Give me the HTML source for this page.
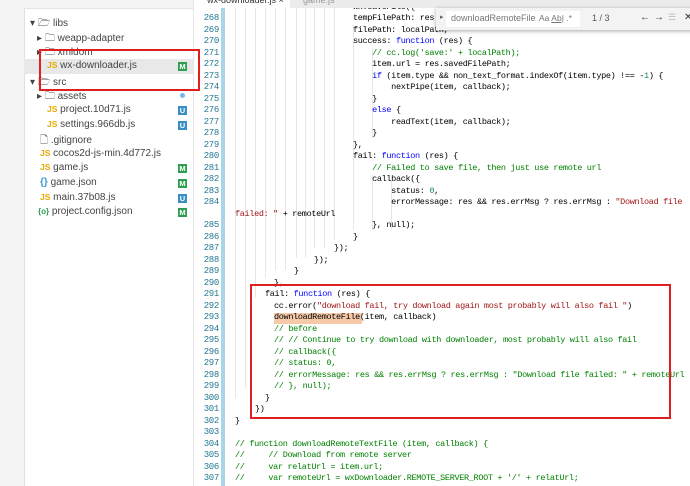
<!DOCTYPE html><html><head><style>
body{margin:0;width:690px;height:486px;overflow:hidden;background:#fff;position:relative;font-family:"Liberation Sans",sans-serif}
.a{position:absolute;white-space:nowrap}
.sb{font-size:10px;color:#444;white-space:nowrap}
.cd{position:absolute;font-family:"Liberation Mono",monospace;font-size:8.5px;letter-spacing:-0.33px;white-space:pre;line-height:11.5px;color:#000}
.ln{position:absolute;left:194px;width:25px;text-align:right;font-family:"Liberation Mono",monospace;font-size:9px;letter-spacing:-0.3px;color:#237893;line-height:11.5px}
.k{color:#0000ff}.c{color:#008000}.s{color:#a31515}.n{color:#098658}
.b{position:absolute;width:9px;height:9px;font-size:7.5px;font-weight:bold;color:#fff;text-align:center;line-height:9px;left:178px}
.js{color:#e8a800;font-size:8.5px;font-weight:bold}
.g{position:absolute;width:1px;background:#e6e6e6}
</style></head><body>
<div class="a" style="left:0;top:0;width:24px;height:486px;background:#f3f3f3;border-right:1px solid #e0e0e0"></div>
<div class="a" style="left:24px;top:0;width:169px;height:8px;background:#f3f3f3;border-bottom:1px solid #e5e5e5"></div>
<div class="a" style="left:193px;top:0;width:1px;height:486px;background:#e5e5e5"></div>
<div class="a" style="left:24px;top:59px;width:169px;height:15px;background:#e8e8e8"></div>
<div class="a sb" style="left:30px;top:16px">▾ <span style="color:#555">🗁</span> libs</div>
<div class="a sb" style="left:37px;top:31px">▸ <span style="color:#555">🗀</span> weapp-adapter</div>
<div class="a sb" style="left:37px;top:45px">▸ <span style="color:#555">🗀</span> xmldom</div>
<div class="a sb" style="left:47px;top:60px"><span class="js">JS</span> wx-downloader.js</div>
<div class="a sb" style="left:30px;top:75px">▾ <span style="color:#555">🗁</span> src</div>
<div class="a sb" style="left:37px;top:89px">▸ <span style="color:#555">🗀</span> assets</div>
<div class="a sb" style="left:47px;top:104px"><span class="js">JS</span> project.10d71.js</div>
<div class="a sb" style="left:47px;top:119px"><span class="js">JS</span> settings.966db.js</div>
<div class="a sb" style="left:40px;top:133px"><span style="color:#555">🗋</span> .gitignore</div>
<div class="a sb" style="left:40px;top:148px"><span class="js">JS</span> cocos2d-js-min.4d772.js</div>
<div class="a sb" style="left:40px;top:162px"><span class="js">JS</span> game.js</div>
<div class="a sb" style="left:40px;top:177px"><span style="color:#3b9bd8;font-weight:bold">{}</span> game.json</div>
<div class="a sb" style="left:40px;top:192px"><span class="js">JS</span> main.37b08.js</div>
<div class="a sb" style="left:38px;top:206px"><span style="color:#2e9e4f;font-size:8px;font-weight:bold">{o}</span> project.config.json</div>
<div class="b" style="top:62px;background:#2e9e4f">M</div>
<div class="a" style="left:180px;top:93px;width:5px;height:5px;border-radius:50%;background:#7cb8e8"></div>
<div class="b" style="top:106px;background:#3a8ec8">U</div>
<div class="b" style="top:121px;background:#3a8ec8">U</div>
<div class="b" style="top:164px;background:#2e9e4f">M</div>
<div class="b" style="top:179px;background:#2e9e4f">M</div>
<div class="b" style="top:194px;background:#3a8ec8">U</div>
<div class="b" style="top:208px;background:#2e9e4f">M</div>
<div class="a" style="left:39px;top:49px;width:157px;height:38px;border:2px solid #e02020"></div>
<!-- guides -->
<div class="g" style="left:235px;top:8px;height:390px"></div>
<div class="g" style="left:245px;top:8px;height:380px"></div>
<div class="g" style="left:255px;top:8px;height:290px"></div>
<div class="g" style="left:265px;top:8px;height:270px"></div>
<div class="g" style="left:275px;top:8px;height:262px"></div>
<div class="g" style="left:285px;top:8px;height:262px"></div>
<div class="g" style="left:296px;top:8px;height:250px"></div>
<div class="g" style="left:305px;top:8px;height:250px"></div>
<div class="g" style="left:314px;top:8px;height:240px"></div>
<div class="g" style="left:324px;top:8px;height:240px"></div>
<div class="g" style="left:334px;top:8px;height:232px"></div>
<div class="g" style="left:353px;top:25px;height:205px"></div>
<div class="g" style="left:372px;top:48px;height:90px"></div>
<div class="g" style="left:372px;top:175px;height:55px"></div>
<div class="g" style="left:391px;top:180px;height:50px"></div>
<!-- line numbers & code -->
<div class="cd" style="left:353px;top:1.75px">wx.saveFile({</div>
<div class="ln" style="top:13.25px">268<br>269<br>270<br>271<br>272<br>273<br>274<br>275<br>276<br>277<br>278<br>279<br>280<br>281<br>282<br>283<br>284</div>
<div class="cd" style="left:353px;top:13.25px">tempFilePath: res
filePath: localPath,
success: <span class="k">function</span> (res) {
    <span class="c">// cc.log('save:' + localPath);</span>
    item.url = res.savedFilePath;
    <span class="k">if</span> (item.type &amp;&amp; non_text_format.indexOf(item.type) !== -<span class="n">1</span>) {
        nextPipe(item, callback);
    }
    <span class="k">else</span> {
        readText(item, callback);
    }
},
fail: <span class="k">function</span> (res) {
    <span class="c">// Failed to save file, then just use remote url</span>
    callback({
        status: <span class="n">0</span>,
        errorMessage: res &amp;&amp; res.errMsg ? res.errMsg : <span class="s">"Download file</span></div>
<div class="cd" style="left:235px;top:208.75px"><span class="s">failed: "</span> + remoteUrl</div>
<div class="ln" style="top:220.25px">285<br>286<br>287<br>288<br>289<br>290<br>291<br>292<br>293<br>294<br>295<br>296<br>297<br>298<br>299<br>300<br>301<br>302<br>303<br>304<br>305<br>306<br>307</div>
<div class="cd" style="left:372px;top:220.25px">}, null);</div>
<div class="cd" style="left:353px;top:231.75px">}</div>
<div class="cd" style="left:334px;top:243.25px">});</div>
<div class="cd" style="left:314px;top:254.75px">});</div>
<div class="cd" style="left:294px;top:266.25px">}</div>
<div class="cd" style="left:274px;top:277.75px">},</div>
<div class="cd" style="left:265px;top:289.25px">fail: <span class="k">function</span> (res) {</div>
<div class="a" style="left:274px;top:312.5px;width:88px;height:11px;background:#f6c9a8"></div>
<div class="cd" style="left:274px;top:300.75px">cc.error(<span class="s">"download fail, try download again most probably will also fail "</span>)
downloadRemoteFile(item, callback)
<span class="c">// before
// // Continue to try download with downloader, most probably will also fail
// callback({
// status: 0,
// errorMessage: res &amp;&amp; res.errMsg ? res.errMsg : "Download file failed: " + remoteUrl
// }, null);</span></div>
<div class="cd" style="left:265px;top:392.75px">}</div>
<div class="cd" style="left:255px;top:404.25px">})</div>
<div class="cd" style="left:235px;top:415.75px">}

<span class="c">// function downloadRemoteTextFile (item, callback) {
//     // Download from remote server
//     var relatUrl = item.url;
//     var remoteUrl = wxDownloader.REMOTE_SERVER_ROOT + '/' + relatUrl;</span></div>
<div class="a" style="left:250px;top:284px;width:417px;height:131px;border:2px solid #e02020"></div>
<!-- tabs -->
<div class="a" style="left:194px;top:0;width:496px;height:8px;background:#ececec;overflow:hidden"></div>
<div class="a" style="left:194px;top:0;width:96px;height:8px;background:#fff"></div>
<div class="a" style="left:207px;top:-5px;font-size:9px;color:#333">wx-downloader.js ×</div>
<div class="a" style="left:303px;top:-5px;font-size:9px;color:#999">game.js</div>
<div class="a" style="left:221px;top:8px;width:4px;height:478px;background:#a8d6e6"></div>
<!-- find widget -->
<div class="a" style="left:436px;top:8px;width:260px;height:22px;background:#f3f3f3;box-shadow:0 1px 4px rgba(0,0,0,.35)"></div>
<div class="a" style="left:440px;top:13px;font-size:7px;color:#666">▸</div>
<div class="a" style="left:446px;top:11px;width:134px;height:16px;background:#fff"></div>
<div class="a" style="left:451px;top:13px;font-size:9px;color:#777">downloadRemoteFile</div>
<div class="a" style="left:539px;top:13px;font-size:8.5px;color:#777">Aa <u>Ab|</u> .*</div>
<div class="a" style="left:592px;top:13px;font-size:9px;color:#555">1 / 3</div>
<div class="a" style="left:640px;top:12px;font-size:10px;color:#333">←</div>
<div class="a" style="left:654px;top:12px;font-size:10px;color:#333">→</div>
<div class="a" style="left:668px;top:12px;font-size:9px;color:#bbb">☰</div>
<div class="a" style="left:684px;top:12px;font-size:10px;color:#333">✕</div>
</body></html>
